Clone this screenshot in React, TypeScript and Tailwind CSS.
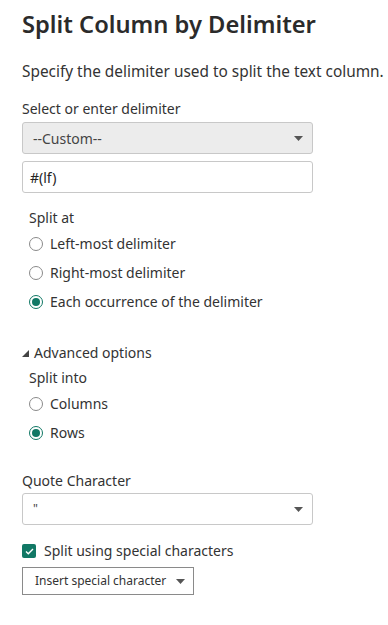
import React from "react";

const font = { fontFamily: '"Noto Sans", "Open Sans", sans-serif' };

function Caret() {
  return (
    <svg width="9" height="5" viewBox="0 0 9 5" className="shrink-0">
      <path d="M0 0h9L4.5 5z" fill="#555" />
    </svg>
  );
}

function Radio({ label, checked }: { label: string; checked?: boolean }) {
  return (
    <div className="flex h-[29px] items-center gap-[7px]">
      <span
        className={`flex h-[14px] w-[14px] items-center justify-center rounded-full border ${
          checked ? "border-[#117865]" : "border-[#8a8a8a]"
        } bg-white`}
      >
        {checked ? <span className="h-[8px] w-[8px] rounded-full bg-[#117865]" /> : null}
      </span>
      <span className="text-[14px] text-[#333]">{label}</span>
    </div>
  );
}

export default function App() {
  return (
    <div className="h-[625px] w-[388px] bg-white px-[22px] text-[#252423]" style={font}>
      <h1 className="pt-[7px] text-[23.7px] leading-[34px] font-semibold text-[#2b2b2b] whitespace-nowrap">
        Split Column by Delimiter
      </h1>
      <p className="mt-[21px] text-[15.4px] leading-[20px] text-[#333] whitespace-nowrap">
        Specify the delimiter used to split the text column.
      </p>

      <p className="mt-[17px] text-[14px] leading-[20px] text-[#333]">Select or enter delimiter</p>
      <div className="mt-[3px] flex h-[32px] w-[291px] items-center justify-between rounded-[3px] border border-[#c8c8c8] bg-[#ececec] pl-[10px] pr-[9px]">
        <span className="text-[14px] text-[#444]">--Custom--</span>
        <Caret />
      </div>
      <div className="mt-[7px] flex h-[32px] w-[291px] items-center rounded-[3px] border border-[#c8c8c8] bg-white pl-[7px]">
        <span className="text-[14px] text-[#252423]">#(lf)</span>
      </div>

      <div className="mt-[15px] pl-[7px]">
        <p className="text-[14px] leading-[20px] text-[#333]">Split at</p>
        <div className="mt-[1px]">
          <Radio label="Left-most delimiter" />
          <Radio label="Right-most delimiter" />
          <Radio label="Each occurrence of the delimiter" checked />
        </div>
      </div>

      <div className="mt-[27px] flex items-center gap-[5px]">
        <svg width="7" height="7" viewBox="0 0 7 7">
          <path d="M7 0v7H0z" fill="#444" />
        </svg>
        <span className="text-[14px] leading-[20px] text-[#333]">Advanced options</span>
      </div>
      <div className="mt-[5px] pl-[7px]">
        <p className="text-[14px] leading-[20px] text-[#333]">Split into</p>
        <div className="mt-[1px]">
          <Radio label="Columns" />
          <Radio label="Rows" checked />
        </div>
      </div>

      <p className="mt-[24px] text-[14px] leading-[20px] text-[#333]">Quote Character</p>
      <div className="mt-[2px] flex h-[32px] w-[291px] items-center justify-between rounded-[3px] border border-[#c8c8c8] bg-white pl-[10px] pr-[9px]">
        <span className="text-[12px] text-[#444]">"</span>
        <Caret />
      </div>

      <div className="mt-[16px] flex items-center gap-[8px]">
        <span className="flex h-[14px] w-[14px] items-center justify-center rounded-[2px] bg-[#117865]">
          <svg width="9" height="7" viewBox="0 0 9 7">
            <path d="M1 3.5l2.3 2.3L8 1" fill="none" stroke="#fff" strokeWidth="1.4" />
          </svg>
        </span>
        <span className="text-[14px] leading-[20px] text-[#333]">Split using special characters</span>
      </div>
      <div className="mt-[6px] flex h-[28px] w-[172px] items-center gap-[10px] border border-[#8a8a8a] bg-white pl-[12px]">
        <span className="text-[12px] text-[#333] whitespace-nowrap">Insert special character</span>
        <Caret />
      </div>
    </div>
  );
}
